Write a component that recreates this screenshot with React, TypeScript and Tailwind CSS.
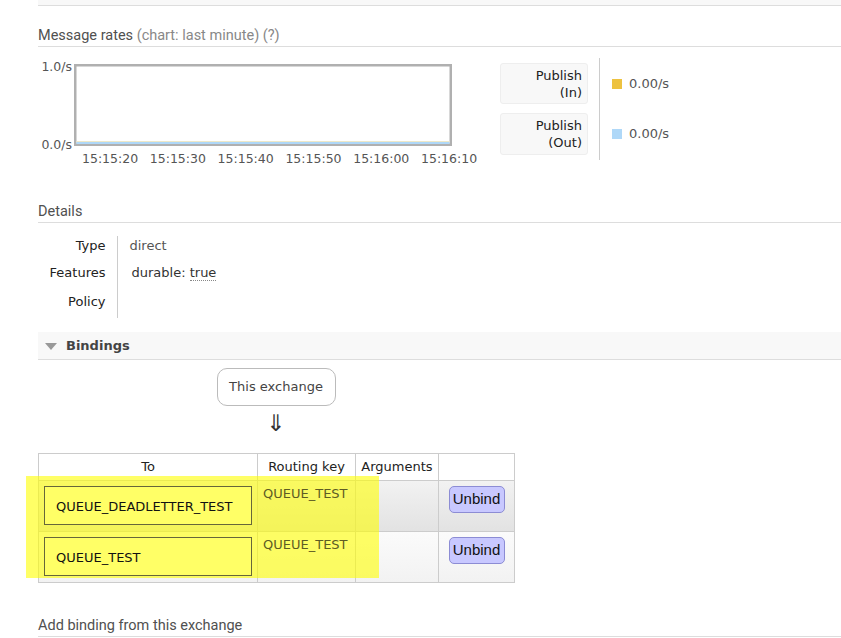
import React from 'react'

const times = ['15:15:20', '15:15:30', '15:15:40', '15:15:50', '15:16:00', '15:16:10']

function RatesChart() {
  return (
    <svg width="462" height="110" viewBox="0 0 462 110" className="block shrink-0 -mt-[2px]">
      <rect x="37.25" y="9.25" width="375.5" height="79.5" fill="#fff" stroke="#b0b0b0" strokeWidth="2.5" />
      <line x1="38.5" y1="85.5" x2="411.5" y2="85.5" stroke="#eee8c8" strokeWidth="1" />
      <line x1="38.5" y1="87" x2="411.5" y2="87" stroke="#afd8f8" strokeWidth="2" />
      <text x="34" y="15" textAnchor="end" fontSize="12.5" fill="#555" fontFamily="DejaVu Sans, sans-serif">1.0/s</text>
      <text x="34" y="93" textAnchor="end" fontSize="12.5" fill="#555" fontFamily="DejaVu Sans, sans-serif">0.0/s</text>
      {times.map((t, i) => (
        <text key={t} x={44 + i * 67.8} y="107" fontSize="12.5" fill="#555" fontFamily="DejaVu Sans, sans-serif">{t}</text>
      ))}
    </svg>
  )
}

function Heading({ children }: { children: React.ReactNode }) {
  return (
    <h2 className="font-['Roboto',sans-serif] text-[14.5px] leading-[20px] text-[#505050] border-b border-[#ddd]">
      {children}
    </h2>
  )
}

export default function App() {
  return (
    <main className="min-h-screen bg-white pl-[38px] font-['DejaVu_Sans',sans-serif] text-[13px] text-[#333] overflow-hidden">
      <div className="h-[6px] bg-[#f8f8f8] border-b border-[#ddd]" />

      <div className="mt-[20px]">
        <Heading>
          Message rates <span className="text-[#888]">(chart: last minute) (?)</span>
        </Heading>
      </div>

      {/* chart + legend */}
      <div className="flex mt-[11px] h-[102px]">
        <RatesChart />
        <div className="flex flex-col gap-[9px] py-[5px] pr-[11px] border-r border-[#ccc]">
          <div className="w-[88px] h-[41px] bg-[#f8f8f8] border border-[#eee] rounded-[3px] text-right pr-[5px] pt-[3px] leading-[17px] text-[#222]">
            Publish<br />(In)
          </div>
          <div className="w-[88px] h-[42px] bg-[#f8f8f8] border border-[#eee] rounded-[3px] text-right pr-[5px] pt-[3px] leading-[17px] text-[#222]">
            Publish<br />(Out)
          </div>
        </div>
        <div className="flex flex-col gap-[9px] py-[5px] pl-[12px] text-[#555]">
          <div className="h-[41px] flex items-center gap-[7px]">
            <span className="w-[10px] h-[10px] bg-[#edc240]" />
            0.00/s
          </div>
          <div className="h-[42px] flex items-center gap-[7px]">
            <span className="w-[10px] h-[10px] bg-[#afd8f8]" />
            0.00/s
          </div>
        </div>
      </div>

      <div className="mt-[42px]">
        <Heading>Details</Heading>
      </div>

      <table className="mt-[13px] border-collapse">
        <tbody>
          <tr className="h-[27px] align-top">
            <th className="w-[79px] pr-[11px] text-right font-normal text-[#222]">Type</th>
            <td className="border-l border-[#ccc] pl-[12px] text-[#555]">direct</td>
          </tr>
          <tr className="h-[29px] align-top">
            <th className="pr-[11px] text-right font-normal text-[#222]">Features</th>
            <td className="border-l border-[#ccc] pl-[14px] text-[#333]">
              durable: <abbr className="no-underline border-b border-dotted border-[#888]">true</abbr>
            </td>
          </tr>
          <tr className="h-[26px] align-top">
            <th className="pr-[11px] text-right font-normal text-[#222]">Policy</th>
            <td className="border-l border-[#ccc] pl-[12px]"></td>
          </tr>
        </tbody>
      </table>

      {/* bindings */}
      <div className="mt-[14px] h-[28px] bg-[#f8f8f8] border-b border-[#ddd] flex items-center pt-[1px]">
        <svg width="12" height="7" viewBox="0 0 12 7" className="ml-[7px] mr-[9px]">
          <path d="M0 0 L12 0 L6 7 Z" fill="#999" />
        </svg>
        <span className="font-bold text-[#444]">Bindings</span>
      </div>

      <div className="w-[476px] flex flex-col items-center">
        <div className="mt-[8px] w-[119px] h-[38px] border border-[#bbb] rounded-[10px] flex items-center justify-center text-[#444]">
          This exchange
        </div>
        <div className="mt-[5px] text-[23px] leading-[24px] text-[#333]">⇓</div>
      </div>

      <div className="relative mt-[18px] w-[476px]">
        <table className="w-[476px] border-collapse table-fixed">
          <thead>
            <tr className="h-[27px]">
              <th className="w-[219px] border border-[#ccc] font-normal text-[#222]">To</th>
              <th className="w-[98px] border border-[#ccc] font-normal text-[#222]">Routing key</th>
              <th className="w-[83px] border border-[#ccc] font-normal text-[#222]">Arguments</th>
              <th className="w-[76px] border border-[#ccc]"></th>
            </tr>
          </thead>
          <tbody>
            {[
              { name: 'QUEUE_DEADLETTER_TEST', bg: 'bg-gradient-to-b from-[#f2f2f2] to-[#e2e2e2]' },
              { name: 'QUEUE_TEST', bg: 'bg-gradient-to-b from-[#fbfbfb] to-[#f2f2f2]' },
            ].map(row => (
              <tr key={row.name} className={'h-[51px] align-top ' + row.bg}>
                <td className="border border-[#ccc] p-[5px]">
                  <div className="relative z-10 h-[39px] border border-[#66663a] bg-[#ffff66] flex items-center pl-[11px] pt-[2px] text-[#111]">
                    {row.name}
                  </div>
                </td>
                <td className="border border-[#ccc] pl-[5px] pt-[3px]">
                  <span className="relative z-10 text-[#5e5c24]">QUEUE_TEST</span>
                </td>
                <td className="border border-[#ccc]"></td>
                <td className="border border-[#ccc] pt-[5px] text-center">
                  <button className="relative z-10 w-[56px] h-[27px] rounded-[5px] border border-[#8c8cd4] bg-[#c8c8ff] font-['Liberation_Sans',sans-serif] text-[15px] text-[#111]">
                    Unbind
                  </button>
                </td>
              </tr>
            ))}
          </tbody>
        </table>
        {/* highlight annotation */}
        <div className="absolute left-[-12px] top-[23px] w-[353px] h-[102px] bg-[rgba(255,255,0,0.6)] pointer-events-none" />
      </div>

      <div className="mt-[33px]">
        <Heading>Add binding from this exchange</Heading>
      </div>
    </main>
  )
}
